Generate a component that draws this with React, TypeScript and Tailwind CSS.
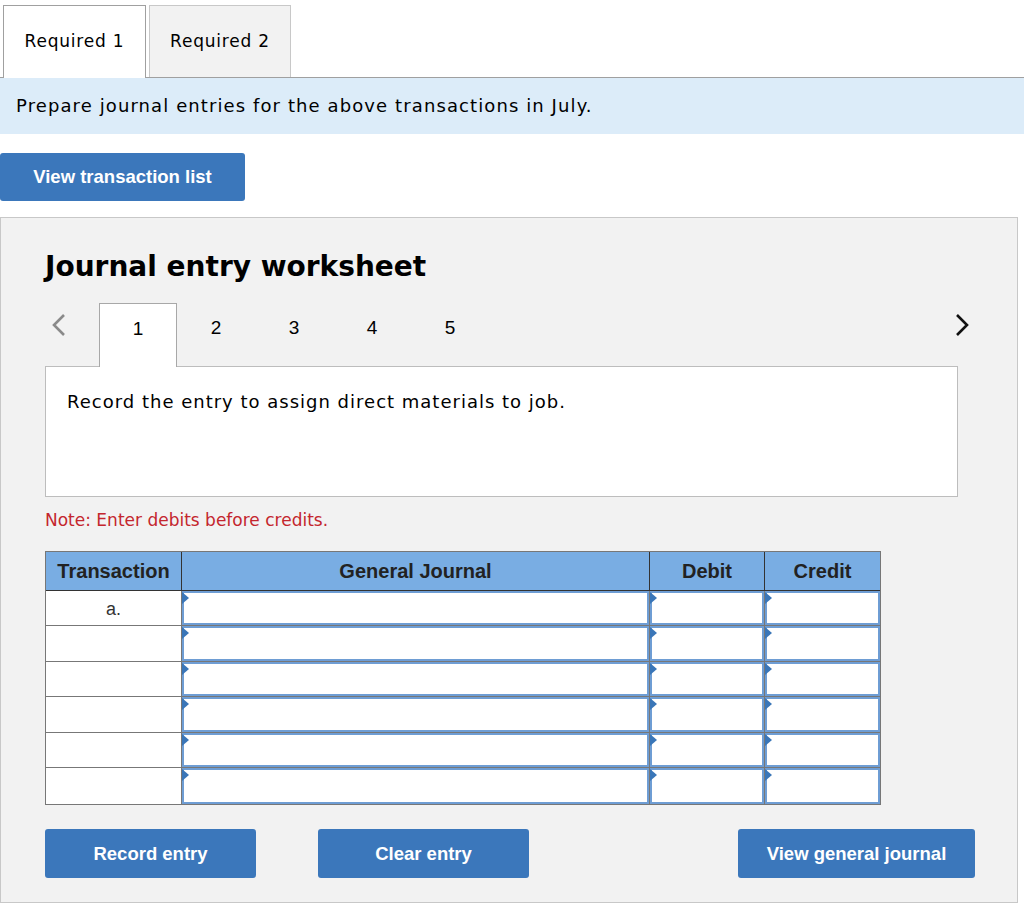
import React from 'react';

const verdana = { fontFamily: '"DejaVu Sans", Verdana, sans-serif' };
const arial = { fontFamily: '"Liberation Sans", Arial, sans-serif' };

function InputCell() {
    return (
        <div className="relative h-full border-2 border-[#6e9dd4] bg-white">
            <svg className="absolute -left-[2px] -top-[1px]" width="8" height="12" viewBox="0 0 8 12">
                <polygon points="0,0 7,6 0,12" fill="#3a76b8" />
            </svg>
        </div>
    );
}

function App() {
    const rows = ['a.', '', '', '', '', ''];
    const tabs = ['1', '2', '3', '4', '5'];

    return (
        <div className="min-h-screen w-[1024px] bg-white text-black">
            {/* top tabs */}
            <div className="flex items-end pt-[5px] pl-[3px] border-b border-[#a0a0a0]" style={verdana}>
                <div className="w-[143px] h-[73px] -mb-px bg-white border border-b-0 border-[#a0a0a0] flex items-center justify-center text-[17px] tracking-[0.8px]">
                    Required 1
                </div>
                <div className="ml-[3px] w-[142px] h-[72px] bg-[#f2f2f2] border border-b-0 border-[#c8c8c8] flex items-center justify-center text-[17px] tracking-[0.8px]">
                    Required 2
                </div>
            </div>

            <div className="h-[56px] bg-[#dcecf9] flex items-center pl-[16px] pb-[2px] text-[18px] tracking-[1.1px]" style={verdana}>
                Prepare journal entries for the above transactions in July.
            </div>

            <div className="pt-[19px] pb-[16px]">
                <button className="w-[245px] h-[48px] rounded-[3px] bg-[#3b77bb] text-white font-bold text-[18.5px]" style={arial}>
                    View transaction list
                </button>
            </div>

            {/* worksheet panel */}
            <div className="w-[1018px] h-[686px] bg-[#f2f2f2] border border-[#c8c8c8] pl-[44px] pt-[30px]">
                <h2 className="font-bold text-[28px] leading-[38px]" style={verdana}>Journal entry worksheet</h2>

                <div className="mt-[17px] flex items-end w-[925px] h-[63px]" style={arial}>
                    <div className="w-[54px] h-full flex items-start justify-start pl-[6px] pt-[10px]">
                        <svg width="16" height="24" viewBox="0 0 16 24">
                            <polyline points="13,2 3,12 13,22" fill="none" stroke="#8a8a8a" strokeWidth="2.6" />
                        </svg>
                    </div>
                    {tabs.map((t, i) => (
                        <div
                            key={t}
                            className={`w-[78px] flex items-start justify-center pt-[11px] text-[19px] ${i === 0 ? 'h-[64px] -mb-px relative z-10 bg-white border border-b-0 border-[#a8a8a8]' : 'h-[63px]'}`}
                        >
                            {t}
                        </div>
                    ))}
                    <div className="flex-1" />
                    <div className="h-full flex items-start pt-[10px]">
                        <svg width="16" height="24" viewBox="0 0 16 24">
                            <polyline points="3,2 13,12 3,22" fill="none" stroke="#111" strokeWidth="2.6" />
                        </svg>
                    </div>
                </div>

                <div className="w-[913px] h-[131px] bg-white border border-[#bdbdbd] pl-[21px] pt-[21px] text-[18px] tracking-[1px]" style={verdana}>
                    Record the entry to assign direct materials to job.
                </div>

                <p className="mt-[11px] text-[#c4262e] text-[17px]" style={verdana}>Note: Enter debits before credits.</p>

                {/* table */}
                <div className="mt-[17px] w-[836px] border border-[#777]" style={arial}>
                    <div className="grid grid-cols-[136px_468px_115px_115px] h-[39px] bg-[#79ade3] border-b border-[#333] font-bold text-[20px] text-[#222]">
                        <div className="flex items-center justify-center border-r border-[#333]">Transaction</div>
                        <div className="flex items-center justify-center border-r border-[#333]">General Journal</div>
                        <div className="flex items-center justify-center border-r border-[#333]">Debit</div>
                        <div className="flex items-center justify-center">Credit</div>
                    </div>
                    {rows.map((r, i) => (
                        <div
                            key={i}
                            className={`grid grid-cols-[136px_468px_115px_115px] h-[35.6px] ${i < rows.length - 1 ? 'border-b border-[#777]' : ''}`}
                        >
                            <div className="bg-white border-r border-[#777] flex items-start justify-center pt-[5px] text-[18px] text-[#333]">{r}</div>
                            <div className="border-r border-[#777]"><InputCell /></div>
                            <div className="border-r border-[#777]"><InputCell /></div>
                            <div><InputCell /></div>
                        </div>
                    ))}
                </div>

                {/* buttons */}
                <div className="mt-[24px] flex w-[930px]" style={arial}>
                    <button className="w-[211px] h-[49px] rounded-[3px] bg-[#3b77bb] text-white font-bold text-[18.5px]">Record entry</button>
                    <button className="ml-[62px] w-[211px] h-[49px] rounded-[3px] bg-[#3b77bb] text-white font-bold text-[18.5px]">Clear entry</button>
                    <div className="flex-1" />
                    <button className="w-[237px] h-[49px] rounded-[3px] bg-[#3b77bb] text-white font-bold text-[18.5px]">View general journal</button>
                </div>
            </div>
        </div>
    );
}

export default App;
